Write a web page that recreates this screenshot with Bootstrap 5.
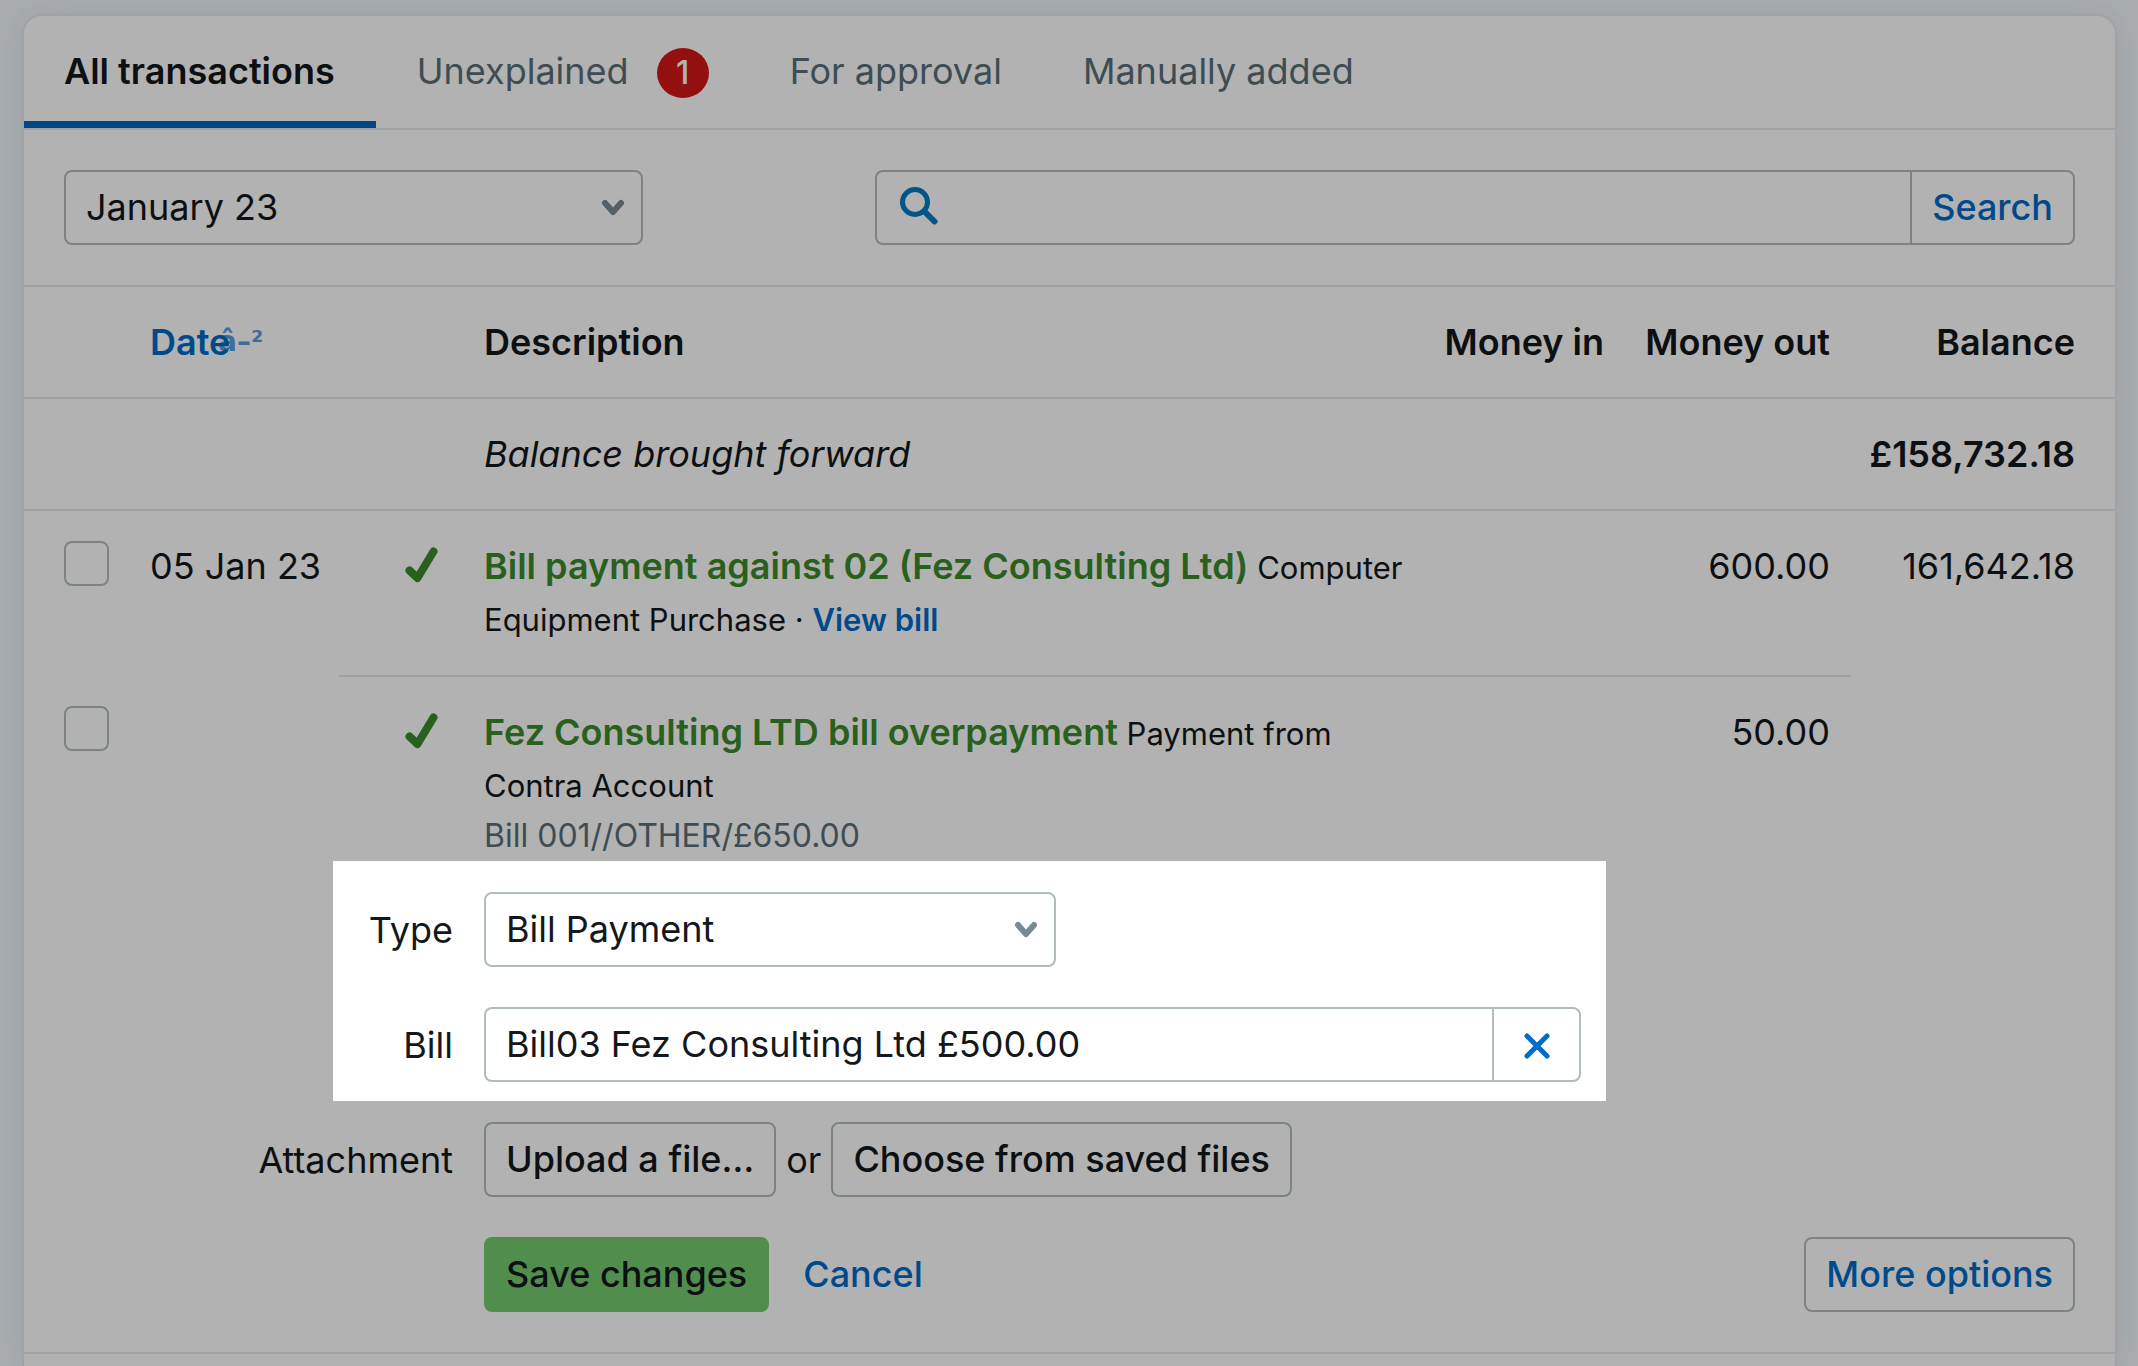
<!DOCTYPE html>
<html lang="en">
<head>
<meta charset="utf-8">
<meta name="viewport" content="width=device-width, initial-scale=1">
<title>Bank account transactions</title>
<link href="https://cdn.jsdelivr.net/npm/bootstrap@5.3.0/dist/css/bootstrap.min.css" rel="stylesheet">
<style>
:root{--ink:#14181a;--muted-ink:#5a6e77;--azure:#006bc8;--leaf:#3b8a2b;--rule:#e7e7f1;--edge:#b1bcc1}
html,body{height:100%}
body{background:#f4f9fb;color:var(--ink);font-family:Inter,"Liberation Sans",sans-serif;font-size:36px;line-height:54px;overflow:hidden;padding:14px 21px 0 22px}
a{color:var(--azure);text-decoration:none}
.panel{background:#fff;border:2px solid var(--rule);border-bottom:0;border-radius:20px 20px 0 0;min-height:100%;box-shadow:0 0 36px rgba(80,90,150,.14)}
.tabs{border-bottom:2px solid var(--rule)}
.tabs .nav-link{color:var(--muted-ink);height:112px;padding:26px 40px 28px 41px;line-height:54px;display:flex;align-items:center;gap:28px;border-radius:0}
.tabs .nav-link.active{color:var(--ink);font-weight:600;padding-left:40px;padding-right:41px;background:none;box-shadow:inset 0 -7px #0066be}
.count{background:#d51717;color:#fff;width:52px;height:50px;line-height:50px;margin-top:4px;border-radius:50%;text-align:center;font-size:32px;font-weight:500}
.toolbar{padding:40px;border-bottom:2px solid var(--rule)}
.form-select,.form-control,.btn{height:75px;border:2px solid var(--edge);border-radius:8px;font-size:36px;line-height:54px;padding:0 20px 2px;color:var(--ink)}
.form-select{background:none;appearance:none}
.btn{font-weight:500;background:#fff;white-space:nowrap}
.btn-azure{color:var(--azure)}
.btn-go{background:#75cc6f;border-color:#75cc6f}
.input-group>.form-control{border-right:0}
.picker{position:relative}
.picker svg{position:absolute;right:18px;top:29px;pointer-events:none}
.month{width:579px}
.finder{width:1200px}
.finder .input-group-text{background:#fff;border:2px solid var(--edge);border-right:0;border-radius:8px;padding:0 0 4px 22px}
.finder .form-control{border-left:0}
.ledger{table-layout:fixed;width:100%}
.ledger th{font-weight:600;padding:28px 21px;line-height:54px;border-bottom:2px solid var(--rule)}
.ledger td{padding:28px 21px;vertical-align:top}
.ledger .full td{border-bottom:2px solid var(--rule)}
.ledger .part td{padding-bottom:30px}
.ledger .part td:nth-child(n+3):nth-child(-n+6){border-bottom:2px solid var(--rule)}
.ledger th:last-child,.ledger td:last-child{padding-right:40px;padding-left:0}
.ledger td:first-child{padding-left:40px;padding-right:0}
.ledger .sum{text-align:right;white-space:nowrap;padding-left:0}
.form-check-input.tick{display:block;float:none;width:45px;height:45px;margin:2px 0 0;border:2px solid var(--edge);border-radius:8px}
.state{display:block;margin:8px 0 0 66px}
.title-link{color:var(--leaf);font-weight:600}
.ledger td.detail{font-size:31px;line-height:50px;padding-right:0}
.detail .first{line-height:54px}
.detail .title-link{font-size:36px}
.memo{color:var(--muted-ink);font-size:32px}
.sorter{position:relative}
.sorter span{position:absolute;left:68px;top:4px;font:700 28px/36px "DejaVu Sans",sans-serif;opacity:.65;white-space:nowrap}
.ledger td.editor{padding:0 40px 40px 0;border-bottom:2px solid var(--rule)}
.spot{position:relative;z-index:2;background:#fff;margin:0 469px 0 309px;padding:31px 25px 19px 0;box-shadow:0 0 0 3000px rgba(0,0,0,.3)}
.line{display:flex;align-items:center}
.line+.line{margin-top:40px}
.line label,.line .tag{flex:none;width:120px;margin-right:31px;text-align:right}
.outer{margin-top:21px}
.outer .line .tag{width:429px}
.joiner{padding:0 10px}
.cancel{margin-left:34px;padding-bottom:2px;font-weight:500}
.kind{width:572px}
.wipe{width:89px;padding:0 0 3px}
</style>
</head>
<body>
<main class="panel">
  <ul class="nav tabs">
    <li class="nav-item"><a class="nav-link active" href="#">All transactions</a></li>
    <li class="nav-item"><a class="nav-link" href="#">Unexplained <span class="count">1</span></a></li>
    <li class="nav-item"><a class="nav-link" href="#">For approval</a></li>
    <li class="nav-item"><a class="nav-link" href="#">Manually added</a></li>
  </ul>

  <form class="toolbar d-flex justify-content-between">
    <div class="picker month">
      <select class="form-select" aria-label="Month"><option>January 23</option></select>
      <svg width="24" height="18" viewBox="0 0 24 18" fill="none" stroke="#788a94" stroke-width="6" stroke-linecap="round" stroke-linejoin="round"><path d="M4 4l8 9 8-9"/></svg>
    </div>
    <div class="input-group finder">
      <label class="input-group-text" for="q">
        <svg width="40" height="40" viewBox="0 0 40 40" fill="none" stroke="#007bc4" stroke-width="5" stroke-linecap="round"><circle cx="16" cy="16" r="12.500"/><path d="M25.500 25.500l10 10" stroke-width="6"/></svg>
      </label>
      <input class="form-control" id="q" type="search" aria-label="Search transactions">
      <button class="btn btn-azure" type="button">Search</button>
    </div>
  </form>

  <table class="ledger">
    <colgroup><col style="width:105px"><col style="width:210px"><col style="width:124px"><col><col style="width:199px"><col style="width:226px"><col style="width:264px"></colgroup>
    <thead>
      <tr>
        <th></th>
        <th><a class="sorter" href="#">Date<span>â–²</span></a></th>
        <th></th>
        <th>Description</th>
        <th class="sum">Money in</th>
        <th class="sum">Money out</th>
        <th class="sum">Balance</th>
      </tr>
    </thead>
    <tbody>
      <tr class="full">
        <td></td><td></td><td></td>
        <td><em>Balance brought forward</em></td>
        <td></td><td></td>
        <td class="sum fw-semibold">£158,732.18</td>
      </tr>
      <tr class="part">
        <td><input class="form-check-input tick" type="checkbox" aria-label="Select transaction of 05 Jan 23"></td>
        <td class="text-nowrap">05 Jan 23</td>
        <td class="px-0"><svg class="state" width="34" height="36" viewBox="0 0 34 36" fill="none" stroke="#3b8a2b" stroke-width="8" stroke-linecap="round" stroke-linejoin="round"><path d="M4.500 23.500L12.500 31 28.500 4.500"/></svg></td>
        <td class="detail"><span class="first"><a class="title-link" href="#">Bill payment against 02 (Fez Consulting Ltd)</a> Computer</span><br>Equipment Purchase · <a class="fw-semibold" href="#">View bill</a></td>
        <td></td>
        <td class="sum">600.00</td>
        <td class="sum">161,642.18</td>
      </tr>
      <tr>
        <td><input class="form-check-input tick" type="checkbox" aria-label="Select bill overpayment"></td>
        <td></td>
        <td class="px-0"><svg class="state" width="34" height="36" viewBox="0 0 34 36" fill="none" stroke="#3b8a2b" stroke-width="8" stroke-linecap="round" stroke-linejoin="round"><path d="M4.500 23.500L12.500 31 28.500 4.500"/></svg></td>
        <td class="detail pb-0"><span class="first"><a class="title-link" href="#">Fez Consulting LTD bill overpayment</a> Payment from</span><br>Contra Account<br><span class="memo">Bill 001//OTHER/£650.00</span></td>
        <td></td>
        <td class="sum">50.00</td>
        <td></td>
      </tr>
      <tr>
        <td class="editor" colspan="7">
          <form>
            <div class="spot">
              <div class="line">
                <label for="kind">Type</label>
                <div class="picker kind">
                  <select class="form-select" id="kind"><option>Bill Payment</option></select>
                  <svg width="24" height="18" viewBox="0 0 24 18" fill="none" stroke="#788a94" stroke-width="6" stroke-linecap="round" stroke-linejoin="round"><path d="M4 4l8 9 8-9"/></svg>
                </div>
              </div>
              <div class="line">
                <label for="bill">Bill</label>
                <div class="input-group">
                  <input class="form-control" id="bill" type="text" value="Bill03 Fez Consulting Ltd £500.00">
                  <button class="btn wipe" type="button" aria-label="Clear bill"><svg width="28" height="28" viewBox="0 0 28 28" stroke="#006bc8" stroke-width="5" stroke-linecap="round"><path d="M4 4l20 20M24 4L4 24"/></svg></button>
                </div>
              </div>
            </div>
            <div class="outer">
              <div class="line">
                <span class="tag">Attachment</span>
                <button class="btn" type="button">Upload a file…</button>
                <span class="joiner">or</span>
                <button class="btn" type="button">Choose from saved files</button>
              </div>
              <div class="line">
                <span class="tag"></span>
                <button class="btn btn-go" type="submit">Save changes</button>
                <a class="cancel" href="#">Cancel</a>
                <button class="btn btn-azure ms-auto" type="button">More options</button>
              </div>
            </div>
          </form>
        </td>
      </tr>
    </tbody>
  </table>
</main>
<script src="https://cdn.jsdelivr.net/npm/bootstrap@5.3.0/dist/js/bootstrap.bundle.min.js"></script>
</body>
</html>
